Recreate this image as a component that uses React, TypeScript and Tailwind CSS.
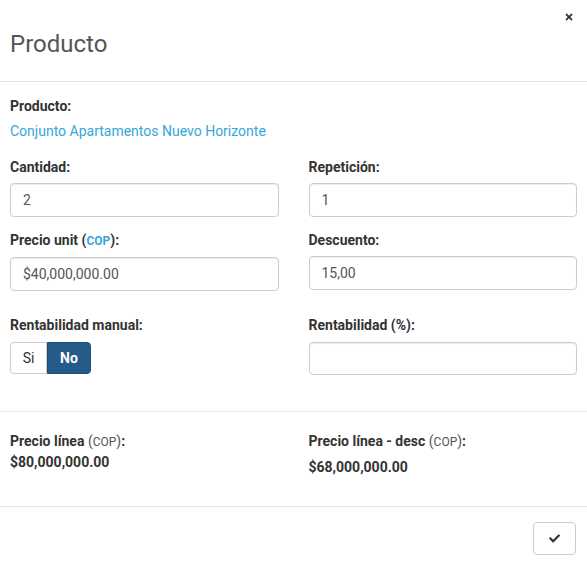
import React from "react";
import { FaTimes, FaCheck } from "react-icons/fa";

function Label({ children }: { children: React.ReactNode }) {
  return <div className="text-[14px] leading-[20px] font-bold text-[#333]">{children}</div>;
}

function Input({ value, h = "h-[34px]" }: { value: string; h?: string }) {
  return (
    <div className={`${h} flex items-center rounded-[4px] border border-[#ccc] px-[12px] text-[14px] text-[#555] shadow-[inset_0_1px_1px_rgba(0,0,0,0.075)]`}>
      {value}
    </div>
  );
}

export default function App() {
  return (
    <div className="w-[587px] h-[569px] bg-white font-['Roboto',sans-serif]">
      <div className="relative h-[82px] border-b border-[#e5e5e5] px-[10px] pt-[31px]">
        <h4 className="text-[24px] leading-[26px] text-[#555]">Producto</h4>
        <button className="absolute right-[13px] top-[12px] text-[#333]">
          <FaTimes size={10} />
        </button>
      </div>

      <div className="px-[10px] pt-[14px]">
        <Label>Producto:</Label>
        <div className="mt-[5px] text-[14px] leading-[20px] text-[#35a7db]">Conjunto Apartamentos Nuevo Horizonte</div>

        <div className="mt-[16px] grid grid-cols-2 gap-x-[30px]">
          <div>
            <Label>Cantidad:</Label>
            <div className="mt-[6px]"><Input value="2" /></div>
          </div>
          <div>
            <Label>Repetición:</Label>
            <div className="mt-[6px]"><Input value="1" /></div>
          </div>
        </div>

        <div className="mt-[13px] grid grid-cols-2 gap-x-[30px]">
          <div>
            <Label>
              Precio unit (<span className="text-[12px] text-[#35a7db]">COP</span>):
            </Label>
            <div className="mt-[6px]"><Input value="$40,000,000.00" /></div>
          </div>
          <div>
            <Label>Descuento:</Label>
            <div className="mt-[6px]"><Input value="15,00" /></div>
          </div>
        </div>

        <div className="mt-[24px] grid grid-cols-2 gap-x-[30px]">
          <div>
            <Label>Rentabilidad manual:</Label>
            <div className="mt-[7px] flex h-[32px] text-[14px]">
              <div className="flex w-[37px] items-center justify-center rounded-l-[4px] border border-[#ccc] text-[#333]">Si</div>
              <div className="flex w-[44px] items-center justify-center rounded-r-[4px] border border-[#204d74] bg-[#265a88] font-bold text-white">No</div>
            </div>
          </div>
          <div>
            <Label>Rentabilidad (%):</Label>
            <div className="mt-[7px]"><Input value="" h="h-[33px]" /></div>
          </div>
        </div>
      </div>

      <div className="mt-[36px] border-t border-[#e5e5e5] px-[10px] pt-[19px]">
        <div className="grid grid-cols-2 gap-x-[30px]">
          <div>
            <Label>
              Precio línea <span className="font-normal text-[#555]">(<span className="text-[12px]">COP</span>)</span>:
            </Label>
            <div className="text-[14px] leading-[20px] font-bold text-[#333]">$80,000,000.00</div>
          </div>
          <div>
            <Label>
              Precio línea - desc <span className="font-normal text-[#555]">(<span className="text-[12px]">COP</span>)</span>:
            </Label>
            <div className="mt-[5px] text-[14px] leading-[20px] font-bold text-[#333]">$68,000,000.00</div>
          </div>
        </div>
      </div>

      <div className="mt-[29px] flex justify-end border-t border-[#e5e5e5] px-[11px] pt-[15px]">
        <button className="flex h-[33px] w-[43px] items-center justify-center rounded-[4px] border border-[#ccc] bg-white text-[#333]">
          <FaCheck size={11} />
        </button>
      </div>
    </div>
  );
}
